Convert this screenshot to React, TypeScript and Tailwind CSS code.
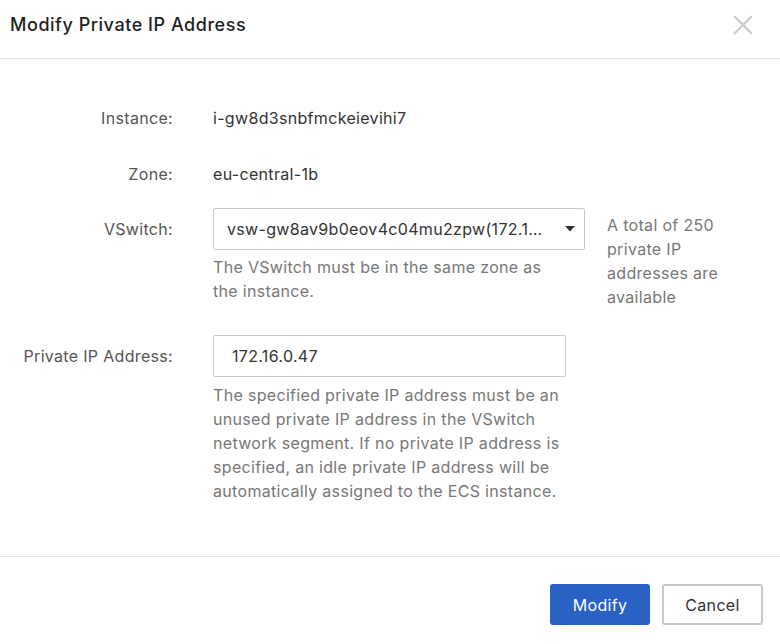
import React from 'react';

const Field = ({ label, children, className = '' }: { label: string; children: React.ReactNode; className?: string }) => (
  <div className={`flex items-start ${className}`}>
    <div className="w-[173px] h-[42px] flex items-center justify-end text-[#555] shrink-0">{label}</div>
    <div className="ml-[40px]">{children}</div>
  </div>
);

export default function App() {
  return (
    <div className="w-[780px] h-[644px] bg-white flex flex-col font-['Inter','Liberation_Sans',sans-serif] text-[16px] leading-[24px] tracking-[0.02em] text-[#333]">
      {/* Header */}
      <div className="h-[59px] shrink-0 border-b border-[#e3e3e3] flex items-start justify-between pl-[10px] pr-[27px] pt-[13px]">
        <h1 className="text-[18px] leading-[24px] font-medium tracking-[0.03em] text-[#1f1f1f]">Modify Private IP Address</h1>
        <button className="mt-[1px] w-[20px] h-[22px] flex items-center justify-center text-[#c9c9c9]">
          <svg width="20" height="20" viewBox="0 0 20 20" fill="none" stroke="currentColor" strokeWidth="2">
            <path d="M1 1 L19 19 M19 1 L1 19" />
          </svg>
        </button>
      </div>

      {/* Body */}
      <div className="flex-1 pt-[38px]">
        <Field label="Instance:">
          <div className="h-[42px] flex items-center">i-gw8d3snbfmckeievihi7</div>
        </Field>

        <Field label="Zone:" className="mt-[14px]">
          <div className="h-[42px] flex items-center">eu-central-1b</div>
        </Field>

        <Field label="VSwitch:" className="mt-[13px]">
          <div className="flex items-start">
            <div>
              <div className="w-[372px] h-[42px] border border-[#c8cacf] rounded-[2px] flex items-center pl-[13px] pr-[9px]">
                <span className="flex-1 truncate pr-[22px]">vsw-gw8av9b0eov4c04mu2zpw(172.16.0.0/24)</span>
                <svg width="10" height="6" viewBox="0 0 10 6" className="shrink-0">
                  <path d="M0 0 H10 L5 5.5 Z" fill="#333" />
                </svg>
              </div>
              <p className="mt-[5px] w-[350px] text-[#777]">The VSwitch must be in the same zone as the instance.</p>
            </div>
            <p className="ml-[22px] mt-[5px] w-[140px] text-[#777]">A total of 250 private IP addresses are available</p>
          </div>
        </Field>

        <Field label="Private IP Address:" className="mt-[26px]">
          <div className="w-[353px] h-[42px] border border-[#c8cacf] rounded-[2px] flex items-center pl-[18px]">172.16.0.47</div>
          <p className="mt-[6px] w-[353px] text-[#777]">
            The specified private IP address must be an unused private IP address in the VSwitch network segment. If no private IP address is specified, an idle private IP address will be automatically assigned to the ECS instance.
          </p>
        </Field>
      </div>

      {/* Footer */}
      <div className="h-[88px] shrink-0 border-t border-[#e3e3e3] flex justify-end items-start pt-[27px] pr-[17px] gap-[12px]">
        <button className="w-[100px] h-[41px] rounded-[3px] bg-[#2962c4] text-white">Modify</button>
        <button className="w-[101px] h-[41px] rounded-[3px] border-2 border-[#c6c9ce] text-[#333]">Cancel</button>
      </div>
    </div>
  );
}
